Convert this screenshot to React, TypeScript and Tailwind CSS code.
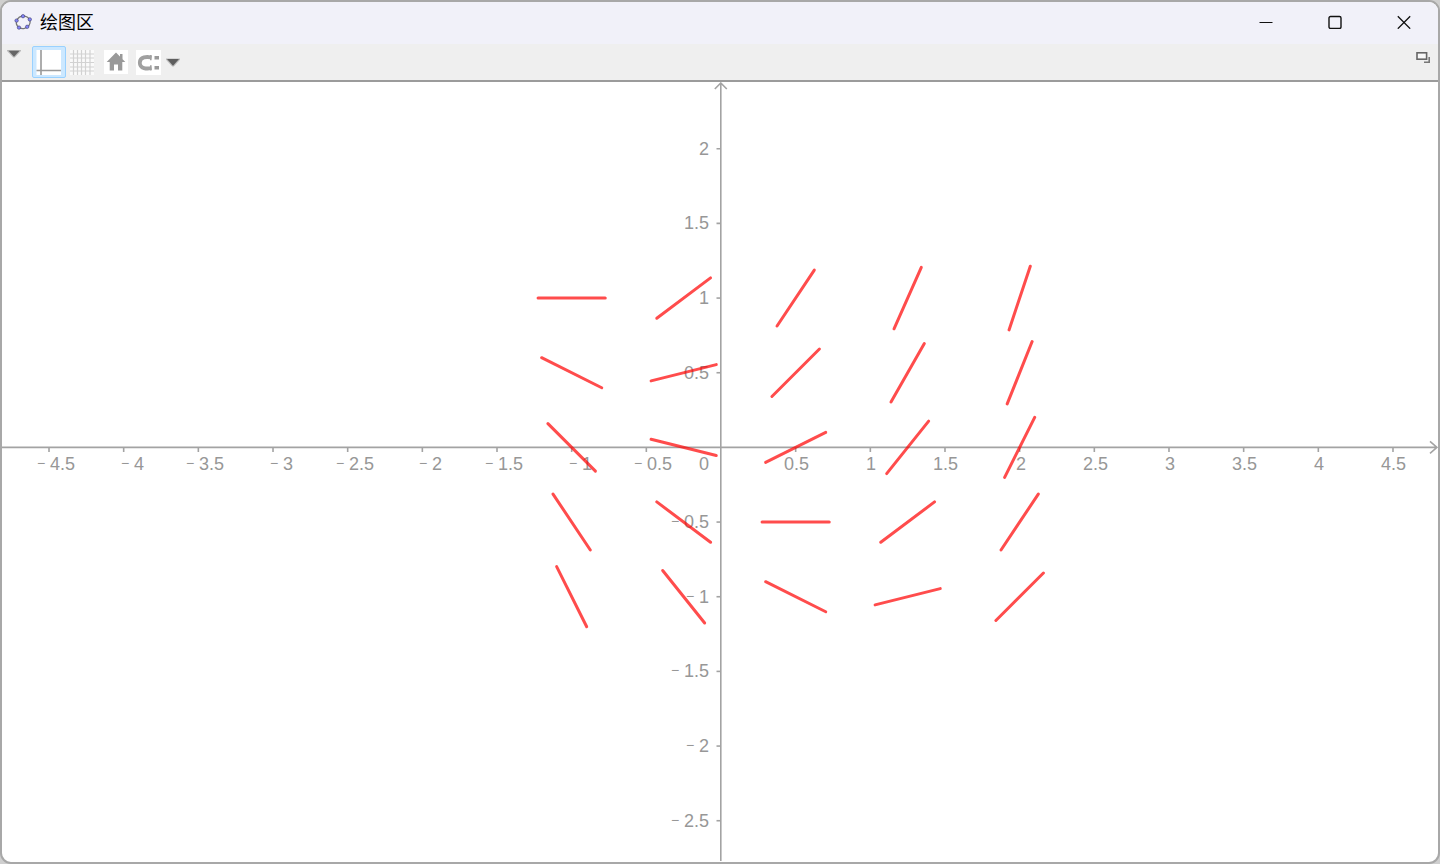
const UNIT = 149.33;
const ORIGIN_X = 721;
const ORIGIN_Y = 447.4;

const px = (x: number) => ORIGIN_X + x * UNIT;
const py = (y: number) => ORIGIN_Y - y * UNIT;

const X_TICKS = Array.from({ length: 19 }, (_, i) => i / 2 - 4.5).filter((v) => v !== 0);
const Y_TICKS = [2, 1.5, 1, 0.5, -0.5, -1, -1.5, -2, -2.5];

const FIELD_X = [-1, -0.25, 0.5, 1.25, 2];
const FIELD_Y = [1, 0.5, 0, -0.5, -1];
const HALF = 33.6;

const digitsWidth = (v: number) => (Number.isInteger(v) ? 10 : 25);

function Label({ value, x, y }: { value: number; x: number; y: number }) {
  return (
    <g>
      {value < 0 && (
        <text x={x - 13} y={y - 2} className="text-[14px]">
          −
        </text>
      )}
      <text x={x} y={y}>
        {Math.abs(value)}
      </text>
    </g>
  );
}

function SlopeField() {
  return (
    <svg
      viewBox="2 82 1436 780"
      className="block min-h-0 w-full flex-1 font-['Liberation_Sans',Arial,sans-serif] text-[18px]"
      role="img"
      aria-label="绘图区"
    >
      <g stroke="#a3a3a3" strokeWidth="1.6" fill="none">
        <path d="M2 447.4H1437M1430 441.4l7 6-7 6" />
        <path d="M720.8 861V83M714.8 89l6-6 6 6" />
        {X_TICKS.map((v) => (
          <path key={v} d={`M${px(v)} 448v4`} />
        ))}
        {Y_TICKS.map((v) => (
          <path key={v} d={`M716.5 ${py(v)}h4`} />
        ))}
      </g>
      <g fill="#979797">
        {X_TICKS.map((v) => {
          const start = v > 0 ? px(v) + 1 - digitsWidth(v) / 2 : px(v) + (Number.isInteger(v) ? 10 : 1);
          return <Label key={v} value={v} x={Math.round(start)} y={470} />;
        })}
        {Y_TICKS.map((v) => (
          <Label key={v} value={v} x={709 - digitsWidth(v)} y={Math.round(py(v) + 6)} />
        ))}
        <Label value={0} x={699} y={470} />
      </g>
      <g stroke="#ff0000" strokeOpacity="0.7" strokeWidth="3" strokeLinecap="round">
        {FIELD_X.map((x) =>
          FIELD_Y.map((y) => {
            const angle = Math.atan(x + y);
            const dx = HALF * Math.cos(angle);
            const dy = HALF * Math.sin(angle);
            return (
              <line key={`${x},${y}`} x1={px(x) - dx} y1={py(y) + dy} x2={px(x) + dx} y2={py(y) - dy} />
            );
          }),
        )}
      </g>
    </svg>
  );
}

function Logo() {
  const nodes = [
    [9, 2.2],
    [15.8, 5.4],
    [13.2, 12.8],
    [5, 13.6],
    [2.6, 6.6],
  ];
  return (
    <svg width="18" height="18" viewBox="0 0 18 18" aria-hidden="true">
      <ellipse cx="9.2" cy="8.3" rx="7" ry="6.2" transform="rotate(-12 9.2 8.3)" fill="none" stroke="#777" strokeWidth="1.3" />
      {nodes.map(([x, y]) => (
        <circle key={x} cx={x} cy={y} r="1.7" fill="#8484f8" stroke="#3a3a70" strokeWidth="0.6" />
      ))}
    </svg>
  );
}

export default function App() {
  return (
    <div className="h-screen bg-[#cfcfcf]">
      <main className="flex h-full flex-col overflow-hidden rounded-[11px] border-2 border-[#a8a8a8] bg-white">
        <header className="flex h-[42px] shrink-0 items-center bg-[#f1f1f9] pl-3">
          <Logo />
          <h1 className="ml-2 pb-1 font-['Noto_Sans_CJK_SC',sans-serif] text-[18px] leading-6 font-normal text-black">绘图区</h1>
          <div className="ml-auto flex h-full pb-0.5">
            <button type="button" aria-label="最小化" className="flex w-[69px] items-center justify-center">
              <svg width="14" height="14" viewBox="0 0 14 14">
                <path d="M.5 7.5h13" stroke="#111" strokeWidth="1.1" />
              </svg>
            </button>
            <button type="button" aria-label="最大化" className="flex w-[69px] items-center justify-center">
              <svg width="14" height="14" viewBox="0 0 14 14">
                <rect x="1" y="1.5" width="12" height="12" rx="1.5" fill="none" stroke="#111" strokeWidth="1.4" />
              </svg>
            </button>
            <button type="button" aria-label="关闭" className="flex w-[69px] items-center justify-center">
              <svg width="14" height="14" viewBox="0 0 14 14">
                <path d="M.8 1.3l12.4 12.4M13.2 1.3L.8 13.7" stroke="#111" strokeWidth="1.3" />
              </svg>
            </button>
          </div>
        </header>

        <div className="flex h-[38px] shrink-0 items-center border-b-2 border-[#9b9b9b] bg-[#efefef] pr-2 pl-1">
          <button type="button" aria-label="样式栏" className="flex h-full w-4 justify-center pt-1.5">
            <svg width="14" height="8" viewBox="0 0 14 8">
              <path d="M0 0h14v1L7.8 7.4H6.2L0 1z" fill="#bbb" />
              <path d="M1.5.8h11L7 6.8z" fill="#666" />
            </svg>
          </button>
          <button
            type="button"
            aria-label="坐标轴"
            aria-pressed="true"
            className="ml-2.5 flex h-8 w-[34px] items-center justify-center rounded-xs border border-[#99d1ff] bg-[#cce8ff]"
          >
            <svg width="26" height="26" viewBox="0 0 26 26">
              <path d="M.5 1H25v25H.5z" fill="#fff" />
              <path d="M5 1v25M.5 21.500H25" stroke="#999" strokeWidth="1.6" />
            </svg>
          </button>
          <button type="button" aria-label="网格" className="ml-1 flex w-6 justify-center">
            <svg width="24" height="25" viewBox="0 0 24 25">
              <path d="M0 0h24v25H0z" fill="#fafafa" />
              <path d="M3.500 0v25M7.500 0v25M11.500 0v25M15.500 0v25M20 0v25M0 4h24M0 8h24M0 12.500h24M0 17h24M0 21h24" stroke="#d2d2d2" strokeWidth="1.2" />
            </svg>
          </button>
          <button type="button" aria-label="恢复默认视图" className="ml-2.5 flex w-6 justify-center">
            <svg width="24" height="24" viewBox="0 0 24 24">
              <path d="M0 0h24v24H0z" fill="#fff" />
              <path d="M12 2.500l9.300 9.500h-3v8.500H14v-6h-4v6H5.700V12h-3z" fill="#999" />
              <path d="M16 4h2.500v5H16z" fill="#999" />
            </svg>
          </button>
          <button type="button" aria-label="点捕捉" className="ml-2 flex w-[25px] justify-center">
            <svg width="25" height="25" viewBox="0 0 25 25">
              <path d="M0 0h25v25H0z" fill="#fff" />
              <path d="M15.500 7.500C11 6.500 3.800 6.500 3.800 12.700S11 19 15.500 18" fill="none" stroke="#a0a0a0" strokeWidth="3.800" />
              <path d="M14.800 5v5.200M14.800 15.300v5.200" stroke="#a0a0a0" strokeWidth="1.600" />
              <path d="M18.500 7.800h4.500M18.500 17.700h4.500" stroke="#999" strokeWidth="3.400" />
            </svg>
          </button>
          <button type="button" aria-label="点捕捉选项" className="ml-1 flex w-4 justify-center">
            <svg width="14" height="9" viewBox="0 0 14 9">
              <path d="M0 .5h14v1.200L7.800 8.400H6.200L0 1.700z" fill="#bbb" />
              <path d="M1 1h12L7 7.800z" fill="#5e5e5e" />
            </svg>
          </button>
          <button type="button" aria-label="在主窗口中查看" className="ml-auto flex h-full w-[14px] items-start justify-center pt-2">
            <svg width="14" height="11" viewBox="0 0 14 11">
              <rect x="1" y=".8" width="9.600" height="6.400" fill="#f8f8f8" stroke="#666" strokeWidth="1.600" />
              <path d="M13.200 5v5.200H8" fill="none" stroke="#777" strokeWidth="1.600" />
            </svg>
          </button>
        </div>

        <SlopeField />
      </main>
    </div>
  );
}
